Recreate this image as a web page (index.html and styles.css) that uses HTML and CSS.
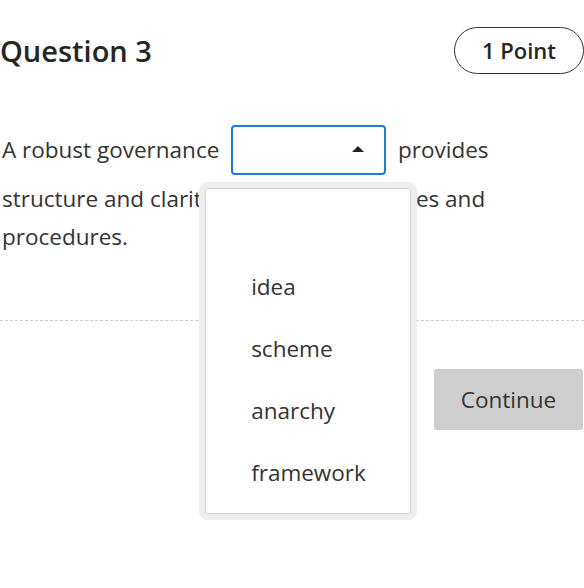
FILE: index.html
```html
<!DOCTYPE html>
<html lang="en">
<head>
<meta charset="utf-8">
<title>Question 3</title>
<link rel="stylesheet" href="styles.css">
</head>
<body>
<main class="question">
  <header class="question-header">
    <h1 class="question-title">Question 3</h1>
    <span class="points">1 Point</span>
  </header>
  <p class="prompt">A robust governance <span class="select-wrap"><span class="select" role="combobox" aria-expanded="true"><span class="caret"></span></span><span class="menu" role="listbox"><span class="menu-inner"><span class="option empty"></span><span class="option">idea</span><span class="option">scheme</span><span class="option">anarchy</span><span class="option">framework</span></span></span></span> provides structure and clarity for policies, practices and procedures.</p>
  <hr class="divider">
  <div class="actions">
    <button class="continue" type="button">Continue</button>
  </div>
</main>
</body>
</html>
```
FILE: styles.css
```css
html, body {
  margin: 0;
  padding: 0;
  background: #ffffff;
}
body {
  font-family: "Open Sans", "Liberation Sans", sans-serif;
  color: #333333;
  width: 584px;
}
.question {
  padding-top: 27px;
  min-height: 561px;
}
.question-header {
  display: flex;
  justify-content: space-between;
  align-items: center;
}
.question-title {
  margin: 0;
  font-size: 29px;
  font-weight: 600;
  color: #262626;
  line-height: 41px;
}
.points {
  border: 1px solid #333333;
  border-radius: 24px;
  padding: 8px 27px;
  font-size: 22px;
  line-height: 29px;
  font-weight: 600;
  color: #262626;
}
.prompt {
  margin: 49px 0 0 2px;
  font-size: 22.5px;
  line-height: 38px;
  padding-right: 80px;
}
.select-wrap {
  position: relative;
  display: inline-block;
  vertical-align: middle;
  margin: 2px 6px 5px 6px;
}
.select {
  display: flex;
  justify-content: flex-end;
  align-items: center;
  box-sizing: border-box;
  width: 155px;
  height: 50px;
  border: 2px solid #1f7be2;
  border-radius: 4px;
  background: #ffffff;
  padding-right: 20px;
}
.caret {
  width: 0;
  height: 0;
  border-left: 6px solid transparent;
  border-right: 6px solid transparent;
  border-bottom: 6px solid #222222;
  margin-top: -2px;
}
.menu {
  position: absolute;
  top: 57px;
  left: -32px;
  z-index: 10;
  display: block;
  width: 218px;
  box-sizing: border-box;
  padding: 6px;
  background: #eeeeee;
  border-radius: 8px;
}
.menu-inner {
  display: flex;
  flex-direction: column;
  background: #ffffff;
  border: 1px solid #d4d4d4;
  border-radius: 3px;
  padding: 5px 0 9px;
}
.option {
  display: block;
  height: 62px;
  line-height: 62px;
  padding-left: 45px;
  font-size: 22.5px;
  color: #333333;
}
.divider {
  margin: 64px 0 0 0;
  border: 0;
  border-top: 1px dashed #cccccc;
  height: 0;
}
.actions {
  display: flex;
  justify-content: flex-end;
  margin-top: 48px;
}
.continue {
  width: 149px;
  height: 61px;
  margin-right: 1px;
  border: 0;
  border-radius: 3px;
  background: #cecece;
  color: #333333;
  font-family: "Open Sans", "Liberation Sans", sans-serif;
  font-size: 22.5px;
}
```
